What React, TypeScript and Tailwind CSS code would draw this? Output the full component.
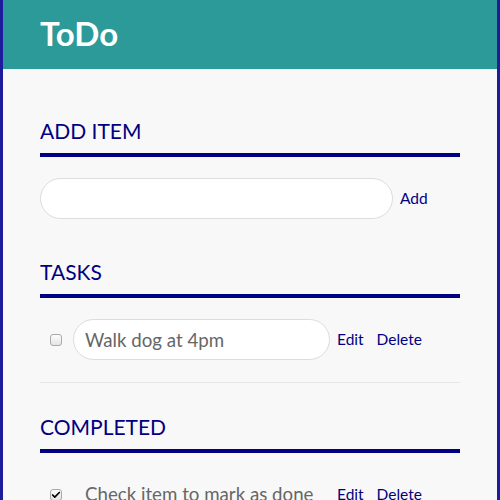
import { Check } from "lucide-react";

function Box({ checked = false }: { checked?: boolean }) {
  return (
    <span className="flex h-[12px] w-[12px] shrink-0 items-center justify-center rounded-[3px] border border-[#a9a9a9] bg-gradient-to-b from-[#fdfdfd] to-[#e4e4e4]">
      {checked && <Check size={10} strokeWidth={4} className="text-black" />}
    </span>
  );
}

function Heading({ children }: { children: string }) {
  return (
    <h2 className="border-b-4 border-[#000080] pb-[12px] text-[21px] leading-[21px] text-[#000080]">
      {children}
    </h2>
  );
}

export default function App() {
  return (
    <div className="h-[500px] w-[500px] overflow-hidden border-x-[3px] border-[#1c1c9c] bg-[#f8f8f8] font-['Lato',sans-serif]">
      <header className="flex h-[69px] items-center bg-[#2c9a98] px-[37px] pb-[2px]">
        <h1 className="text-[33px] leading-none font-bold text-white">ToDo</h1>
      </header>

      <main className="px-[37px]">
        <section className="pt-[51px]">
          <Heading>ADD ITEM</Heading>
          <div className="mt-[21px] flex items-center gap-[7px]">
            <input
              type="text"
              className="h-[41px] w-[353px] rounded-full border border-[#dcdcdc] bg-white px-[12px] text-[19px] text-[#666] outline-none"
            />
            <button className="text-[15.5px] text-[#000080]">Add</button>
          </div>
        </section>

        <section className="pt-[42px]">
          <Heading>TASKS</Heading>
          <div className="mt-[21px] flex items-center border-b border-[#e6e6e6] pb-[22px] pl-[10px]">
            <Box />
            <input
              type="text"
              defaultValue="Walk dog at 4pm"
              className="ml-[11px] h-[41px] w-[257px] rounded-full border border-[#dcdcdc] bg-white px-[11px] text-[18.7px] text-[#666] outline-none"
            />
            <button className="ml-[7px] text-[15.5px] text-[#000080]">Edit</button>
            <button className="ml-[13px] text-[15.5px] text-[#000080]">Delete</button>
          </div>
        </section>

        <section className="pt-[33px]">
          <Heading>COMPLETED</Heading>
          <div className="mt-[21px] flex h-[41px] items-center pl-[10px]">
            <Box checked />
            <span className="ml-[23px] w-[245px] text-[18.7px] text-[#666]">
              Check item to mark as done
            </span>
            <button className="ml-[7px] text-[15.5px] text-[#000080]">Edit</button>
            <button className="ml-[13px] text-[15.5px] text-[#000080]">Delete</button>
          </div>
        </section>
      </main>
    </div>
  );
}
